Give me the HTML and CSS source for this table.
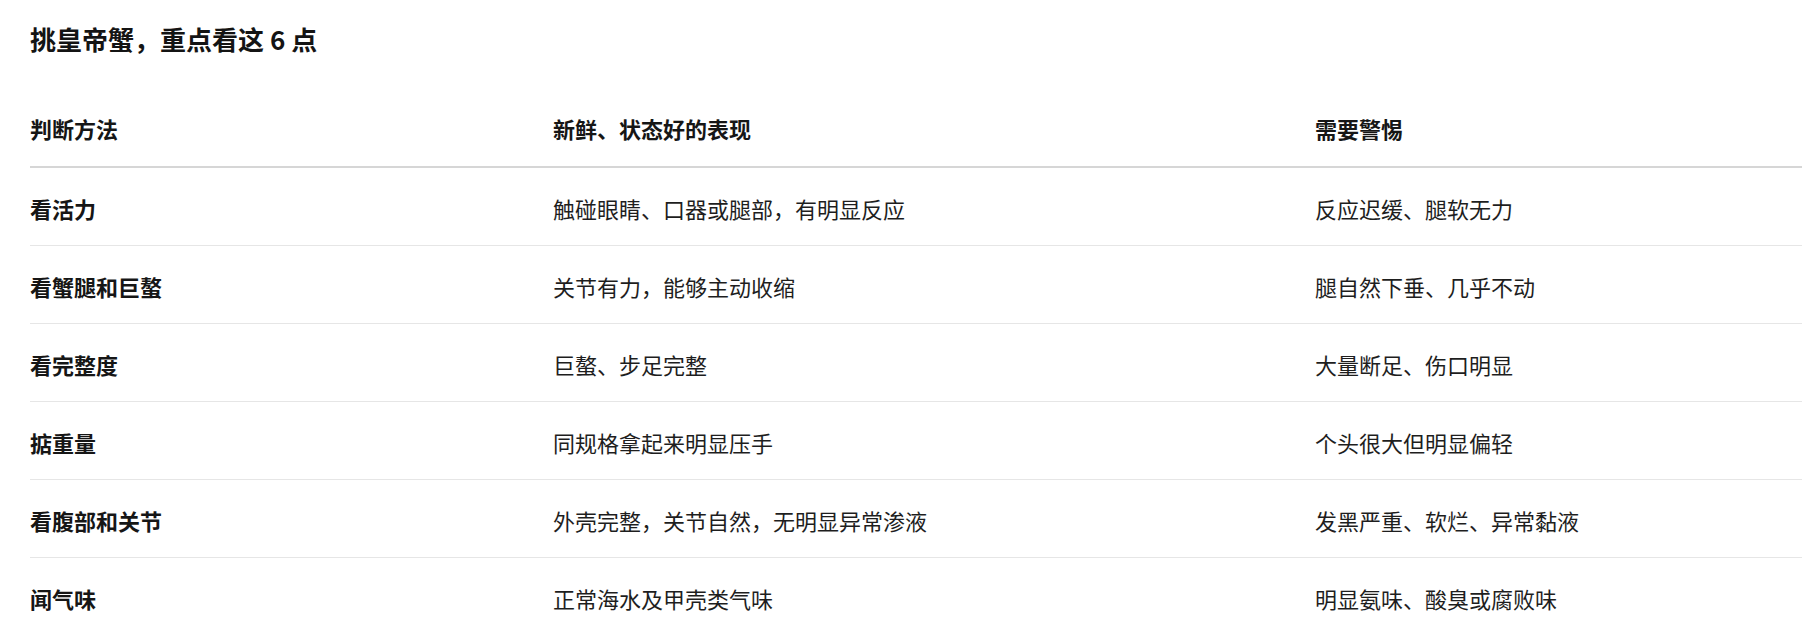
FILE: index.html
```html
<!DOCTYPE html>
<html lang="zh-CN">
<head>
<meta charset="utf-8">
<title>挑皇帝蟹，重点看这 6 点</title>
<link rel="stylesheet" href="styles.css">
</head>
<body>
<main class="page">
  <h1 class="title">挑皇帝蟹，重点看这 6 点</h1>
  <table class="guide">
    <colgroup>
      <col class="c-method">
      <col class="c-good">
      <col class="c-warn">
    </colgroup>
    <thead>
      <tr>
        <th>判断方法</th>
        <th>新鲜、状态好的表现</th>
        <th>需要警惕</th>
      </tr>
    </thead>
    <tbody>
      <tr><td class="name">看活力</td><td>触碰眼睛、口器或腿部，有明显反应</td><td>反应迟缓、腿软无力</td></tr>
      <tr><td class="name">看蟹腿和巨螯</td><td>关节有力，能够主动收缩</td><td>腿自然下垂、几乎不动</td></tr>
      <tr><td class="name">看完整度</td><td>巨螯、步足完整</td><td>大量断足、伤口明显</td></tr>
      <tr><td class="name">掂重量</td><td>同规格拿起来明显压手</td><td>个头很大但明显偏轻</td></tr>
      <tr><td class="name">看腹部和关节</td><td>外壳完整，关节自然，无明显异常渗液</td><td>发黑严重、软烂、异常黏液</td></tr>
      <tr><td class="name">闻气味</td><td>正常海水及甲壳类气味</td><td>明显氨味、酸臭或腐败味</td></tr>
    </tbody>
  </table>
</main>
</body>
</html>
```

FILE: styles.css
```css
html, body {
  margin: 0;
  padding: 0;
  background: #ffffff;
}

body {
  font-family: "Noto Sans CJK SC", "Noto Sans", sans-serif;
  color: #1b1b1b;
}

.page {
  padding: 19px 0 0 30px;
}

.title {
  margin: 0;
  font-size: 26px;
  line-height: 39px;
  font-weight: 700;
  color: #141414;
}

.guide {
  margin-top: 30px;
  width: 100%;
  border-collapse: collapse;
  table-layout: fixed;
  font-size: 22px;
  line-height: 33px;
}

.c-method { width: 523px; }
.c-good { width: 762px; }

.guide th {
  text-align: left;
  font-weight: 700;
  padding: 24px 0 21px;
  border-bottom: 2px solid #d6d6d6;
  color: #161616;
}

.guide td {
  padding: 24px 0 20px;
  border-bottom: 1px solid #e6e6e6;
  white-space: nowrap;
  color: #1e1e1e;
}

.guide td.name {
  font-weight: 700;
  color: #161616;
}

.guide tbody tr:last-child td {
  border-bottom: none;
}
```
